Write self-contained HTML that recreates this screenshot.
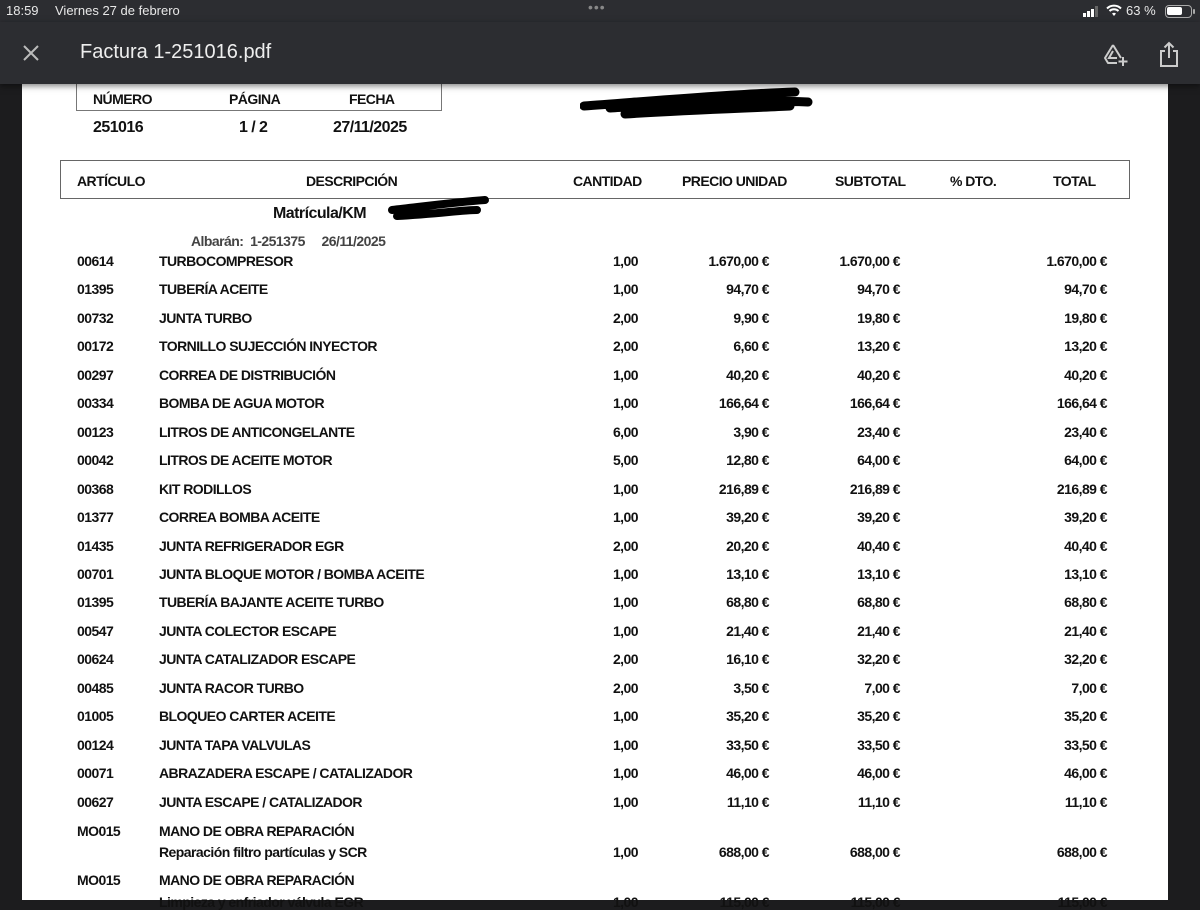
<!DOCTYPE html>
<html><head><meta charset="utf-8"><style>
*{margin:0;padding:0;box-sizing:border-box}
body{width:1200px;height:900px;overflow:hidden;background:#1c1c1e;font-family:"Liberation Sans",sans-serif;position:relative}
.sb{position:absolute;left:0;top:0;width:1200px;height:22px;background:#2c2d31;color:#e8e8e8;font-size:13px}
.tb{position:absolute;left:0;top:22px;width:1200px;height:62px;background:#2c2d31;box-shadow:0 2px 6px rgba(0,0,0,.5);z-index:2}
.page{position:absolute;left:22px;top:84px;width:1146px;height:816px;background:#fff}
.t{position:absolute;font-weight:bold;font-size:14px;letter-spacing:-0.55px;color:#111;white-space:nowrap;line-height:16px}
.r{text-align:right}
.g{color:#444}
</style></head><body>
<div class="sb">
<span style="position:absolute;left:6px;top:3px">18:59</span>
<span style="position:absolute;left:55px;top:3px">Viernes 27 de febrero</span>
<span style="position:absolute;left:588px;top:-1px;color:#888;font-size:14px;letter-spacing:1px">•••</span>
<svg style="position:absolute;left:1083px;top:6px" width="20" height="11"><rect x="0" y="7" width="3" height="4" fill="#fff"/><rect x="4" y="5" width="3" height="6" fill="#fff"/><rect x="8" y="3" width="3" height="8" fill="#fff"/><rect x="12" y="0" width="3" height="11" fill="#666"/></svg>
<svg style="position:absolute;left:1106px;top:4px" width="16" height="13" viewBox="0 0 16 13"><path d="M1 4.5a10 10 0 0 1 14 0" stroke="#fff" stroke-width="2" fill="none"/><path d="M3.5 7a6.5 6.5 0 0 1 9 0" stroke="#fff" stroke-width="2" fill="none"/><path d="M6 9.5l2 2.5 2-2.5a3 3 0 0 0-4 0z" fill="#fff"/></svg>
<span style="position:absolute;left:1126px;top:3px">63 %</span>
<div style="position:absolute;left:1165px;top:5px;width:27px;height:13px;border:1.5px solid #aaa;border-radius:4px"><div style="position:absolute;left:1px;top:1px;width:15px;height:8px;background:#fff;border-radius:2px"></div></div>
<div style="position:absolute;left:1193px;top:9px;width:2px;height:5px;background:#aaa;border-radius:1px"></div>
</div>
<div class="tb">
<svg style="position:absolute;left:22px;top:22px" width="18" height="18"><path d="M2 2L16 16M16 2L2 16" stroke="#bbb" stroke-width="2"/></svg>
<span style="position:absolute;left:80px;top:19px;color:#eee;font-size:20px">Factura 1-251016.pdf</span>
<svg style="position:absolute;left:1102px;top:20px" width="28" height="26" viewBox="0 0 28 26"><path d="M11 3L3 16l3 5h9M11 3l8 13" stroke="#ccc" stroke-width="2" fill="none" stroke-linejoin="round"/><path d="M11 9l-4 7h8" stroke="#ccc" stroke-width="2" fill="none"/><path d="M21 15v9M16.5 19.5h9" stroke="#ccc" stroke-width="2"/></svg>
<svg style="position:absolute;left:1158px;top:18px" width="22" height="28" viewBox="0 0 22 28"><path d="M7 11H3v15h16V11h-4" stroke="#ccc" stroke-width="2" fill="none"/><path d="M11 18V3M6.5 7.5L11 3l4.5 4.5" stroke="#ccc" stroke-width="2" fill="none"/></svg>
</div>
<div class="page">
<div style="position:absolute;left:54px;top:-4px;width:366px;height:31px;border:1.5px solid #777;border-top:none"></div>
<div class="t" style="left:71px;top:7px">NÚMERO</div>
<div class="t" style="left:207px;top:7px">PÁGINA</div>
<div class="t" style="left:327px;top:7px">FECHA</div>
<div class="t" style="left:71px;top:36px;font-size:16px">251016</div>
<div class="t" style="left:217px;top:36px;font-size:16px">1 / 2</div>
<div class="t" style="left:311px;top:36px;font-size:16px">27/11/2025</div>
<svg style="position:absolute;left:558px;top:0" width="235" height="40"><path d="M4 22 C60 18 150 10 215 8 M30 24 C100 20 170 15 228 18 M45 30 C110 26 170 24 210 22" stroke="#000" stroke-width="9" stroke-linecap="round" fill="none"/></svg>
<div style="position:absolute;left:38px;top:76px;width:1070px;height:39px;border:1.5px solid #666"></div>
<div class="t" style="left:55px;top:89px">ARTÍCULO</div>
<div class="t" style="left:284px;top:89px">DESCRIPCIÓN</div>
<div class="t" style="left:551px;top:89px">CANTIDAD</div>
<div class="t" style="left:660px;top:89px">PRECIO UNIDAD</div>
<div class="t" style="left:813px;top:89px">SUBTOTAL</div>
<div class="t" style="left:928px;top:89px">% DTO.</div>
<div class="t" style="left:1031px;top:89px">TOTAL</div>
<div class="t" style="left:251px;top:122px;font-size:16px">Matrícula/KM</div>
<svg style="position:absolute;left:365px;top:110px" width="105" height="30"><path d="M5 16 C40 12 70 8 98 6 M10 22 C50 20 75 16 90 16" stroke="#000" stroke-width="8" stroke-linecap="round" fill="none"/></svg>
<div class="t g" style="left:169px;top:149px">Albarán:&nbsp; 1-251375&nbsp;&nbsp;&nbsp;&nbsp; 26/11/2025</div>
<div id="rows"></div>
</div>
<script>
var d=[
["00614","TURBOCOMPRESOR","1,00","1.670,00 €","1.670,00 €"],
["01395","TUBERÍA ACEITE","1,00","94,70 €","94,70 €"],
["00732","JUNTA TURBO","2,00","9,90 €","19,80 €"],
["00172","TORNILLO SUJECCIÓN INYECTOR","2,00","6,60 €","13,20 €"],
["00297","CORREA DE DISTRIBUCIÓN","1,00","40,20 €","40,20 €"],
["00334","BOMBA DE AGUA MOTOR","1,00","166,64 €","166,64 €"],
["00123","LITROS DE ANTICONGELANTE","6,00","3,90 €","23,40 €"],
["00042","LITROS DE ACEITE MOTOR","5,00","12,80 €","64,00 €"],
["00368","KIT RODILLOS","1,00","216,89 €","216,89 €"],
["01377","CORREA BOMBA ACEITE","1,00","39,20 €","39,20 €"],
["01435","JUNTA REFRIGERADOR EGR","2,00","20,20 €","40,40 €"],
["00701","JUNTA BLOQUE MOTOR / BOMBA ACEITE","1,00","13,10 €","13,10 €"],
["01395","TUBERÍA BAJANTE ACEITE TURBO","1,00","68,80 €","68,80 €"],
["00547","JUNTA COLECTOR ESCAPE","1,00","21,40 €","21,40 €"],
["00624","JUNTA CATALIZADOR ESCAPE","2,00","16,10 €","32,20 €"],
["00485","JUNTA RACOR TURBO","2,00","3,50 €","7,00 €"],
["01005","BLOQUEO CARTER ACEITE","1,00","35,20 €","35,20 €"],
["00124","JUNTA TAPA VALVULAS","1,00","33,50 €","33,50 €"],
["00071","ABRAZADERA ESCAPE / CATALIZADOR","1,00","46,00 €","46,00 €"],
["00627","JUNTA ESCAPE / CATALIZADOR","1,00","11,10 €","11,10 €"]];
var h="",off=22,top0=84;
function row(y,a,b,c,p,s){y=y-top0-8;
h+='<div class="t" style="left:'+(77-off)+'px;top:'+y+'px">'+a+'</div><div class="t" style="left:'+(159-off)+'px;top:'+y+'px">'+b+'</div>';
if(c){h+='<div class="t r" style="right:'+(1146-(638-off))+'px;top:'+y+'px">'+c+'</div><div class="t r" style="right:'+(1146-(769-off))+'px;top:'+y+'px">'+p+'</div><div class="t r" style="right:'+(1146-(900-off))+'px;top:'+y+'px">'+s+'</div><div class="t r" style="right:'+(1146-(1107-off))+'px;top:'+y+'px">'+s+'</div>';}}
for(var i=0;i<d.length;i++){row(261+i*28.45,d[i][0],d[i][1],d[i][2],d[i][3],d[i][4]);}
row(831,"MO015","MANO DE OBRA REPARACIÓN");
row(852,"","Reparación filtro partículas y SCR","1,00","688,00 €","688,00 €");
row(880,"MO015","MANO DE OBRA REPARACIÓN");
row(902,"","Limpieza y enfriador válvula EGR","1,00","115,00 €","115,00 €");
document.getElementById("rows").innerHTML=h;
</script>
</body></html>
